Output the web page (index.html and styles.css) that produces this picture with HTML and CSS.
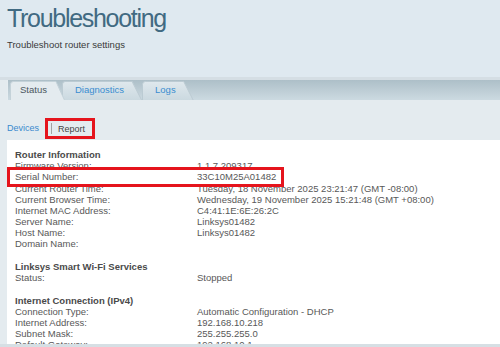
FILE: index.html
```html
<!DOCTYPE html>
<html>
<head>
<meta charset="utf-8">
<link rel="stylesheet" href="styles.css">
</head>
<body>
<header class="page-head">
  <h1 class="title">Troubleshooting</h1>
  <p class="subtitle">Troubleshoot router settings</p>
</header>
<nav class="tabbar">
  <div class="tab active">
    <svg class="tab-shape" viewBox="0 0 55 19" preserveAspectRatio="none"><path d="M0.5 19V3.5Q0.5 0.5 3.5 0.5H46L54.5 19" fill="#e4ebef" stroke="#c4d2d9"/></svg>
    <span class="tab-label">Status</span>
  </div>
  <div class="tab">
    <svg class="tab-shape" viewBox="0 0 80 19" preserveAspectRatio="none"><defs><linearGradient id="g1" x1="0" y1="0" x2="0" y2="1"><stop offset="0" stop-color="#dfe8ed"/><stop offset="1" stop-color="#cbd9e0"/></linearGradient></defs><path d="M0.5 19V3.5Q0.5 0.5 3.5 0.5H70L79.5 19" fill="url(#g1)" stroke="#bccbd3"/></svg>
    <span class="tab-label link">Diagnostics</span>
  </div>
  <div class="tab">
    <svg class="tab-shape" viewBox="0 0 52 19" preserveAspectRatio="none"><defs><linearGradient id="g2" x1="0" y1="0" x2="0" y2="1"><stop offset="0" stop-color="#dfe8ed"/><stop offset="1" stop-color="#cbd9e0"/></linearGradient></defs><path d="M0.5 19V3.5Q0.5 0.5 3.5 0.5H42L51.5 19" fill="url(#g2)" stroke="#bccbd3"/></svg>
    <span class="tab-label link">Logs</span>
  </div>
</nav>
<div class="subnav">
  <span class="sublink">Devices</span>
  <span class="highlight-box"><span class="sep"></span><span class="subcurrent">Report</span></span>
</div>
<main class="panel">
  <h2 class="sec-head">Router Information</h2>
  <div class="row"><span>Firmware Version:</span><span>1.1.7.209317</span></div>
  <div class="row row-marked"><span>Serial Number:</span><span>33C10M25A01482</span></div>
  <div class="row"><span>Current Router Time:</span><span>Tuesday, 18 November 2025 23:21:47 (GMT -08:00)</span></div>
  <div class="row"><span>Current Browser Time:</span><span>Wednesday, 19 November 2025 15:21:48 (GMT +08:00)</span></div>
  <div class="row"><span>Internet MAC Address:</span><span>C4:41:1E:6E:26:2C</span></div>
  <div class="row"><span>Server Name:</span><span>Linksys01482</span></div>
  <div class="row"><span>Host Name:</span><span>Linksys01482</span></div>
  <div class="row"><span>Domain Name:</span><span></span></div>

  <h2 class="sec-head sec-gap">Linksys Smart Wi-Fi Services</h2>
  <div class="row"><span>Status:</span><span>Stopped</span></div>

  <h2 class="sec-head sec-gap">Internet Connection (IPv4)</h2>
  <div class="row"><span>Connection Type:</span><span>Automatic Configuration - DHCP</span></div>
  <div class="row"><span>Internet Address:</span><span>192.168.10.218</span></div>
  <div class="row"><span>Subnet Mask:</span><span>255.255.255.0</span></div>
  <div class="row"><span>Default Gateway:</span><span>192.168.10.1</span></div>
</main>
<footer class="foot"></footer>
</body>
</html>
```
FILE: styles.css
```css
* { box-sizing: border-box; }
html, body { margin: 0; padding: 0; }
body {
  width: 500px;
  height: 347px;
  overflow: hidden;
  background: #e4ebef;
  font-family: "Liberation Sans", Arial, sans-serif;
  color: #555;
}
.page-head {
  height: 80px;
  background: #dfe9f0;
  border-bottom: 3px solid #d5dee4;
  padding: 3px 0 0 7px;
}
.title {
  margin: 0;
  font-size: 25px;
  line-height: 30px;
  font-weight: normal;
  letter-spacing: -1.3px;
  color: #416a82;
}
.subtitle {
  margin: 6px 0 0;
  font-size: 9.5px;
  line-height: 12px;
  color: #3a3a3a;
}
.tabbar {
  height: 20px;
  margin-left: 7px;
  border-left: 1px solid #e6edf1;
  padding: 1px 0 0 2px;
  background: linear-gradient(#adbfc8, #ccdae1);
  display: flex;
}
.tab {
  position: relative;
  height: 19px;
  padding: 0 18px 0 13px;
}
.tab.active { padding-left: 10px; z-index: 2; }
.tab + .tab { margin-left: -3px; }
.tab + .tab + .tab { margin-left: 0; z-index: 0; }
.tab:nth-child(2) { z-index: 1; }
.tab-shape {
  position: absolute;
  left: 0; top: 0;
  width: 100%;
  height: 100%;
}
.tab-label {
  position: relative;
  display: block;
  font-size: 9.5px;
  line-height: 17px;
  color: #4b5761;
}
.tab-label.link { color: #3a8dd0; }
.subnav {
  height: 40px;
  padding: 18px 0 0 7px;
  display: flex;
  align-items: flex-start;
  font-size: 9px;
}
.sublink {
  line-height: 21px;
  color: #3a8ace;
  margin-right: 6px;
}
.highlight-box {
  display: flex;
  align-items: center;
  height: 21px;
  border: 3px solid #e5141c;
  padding: 0 7px 0 3px;
}
.sep {
  width: 1px;
  height: 11px;
  background: #a2a2a2;
  margin-right: 6px;
}
.subcurrent { color: #444; }
.panel {
  margin: 0 0 0 7px;
  height: 204px;
  overflow: hidden;
  background: #fff;
  padding: 9px 0 0 8px;
}
.sec-head {
  margin: 0;
  font-size: 9.5px;
  line-height: 11px;
  font-weight: bold;
  color: #4a4a4a;
}
.sec-gap { margin-top: 12px; }
.row {
  display: grid;
  grid-template-columns: 182px 1fr;
  font-size: 9.5px;
  line-height: 11px;
  color: #585858;
  white-space: nowrap;
}
.row-marked {
  position: relative;
  width: 277px;
  margin: -4px 0 -4px -8px;
  padding-left: 5px;
  border: 3px solid #e5141c;
  background: #fff;
  line-height: 14px;
  grid-template-columns: 182px 1fr;
}
.foot {
  height: 3px;
  background: #d6dfe4;
}
```
